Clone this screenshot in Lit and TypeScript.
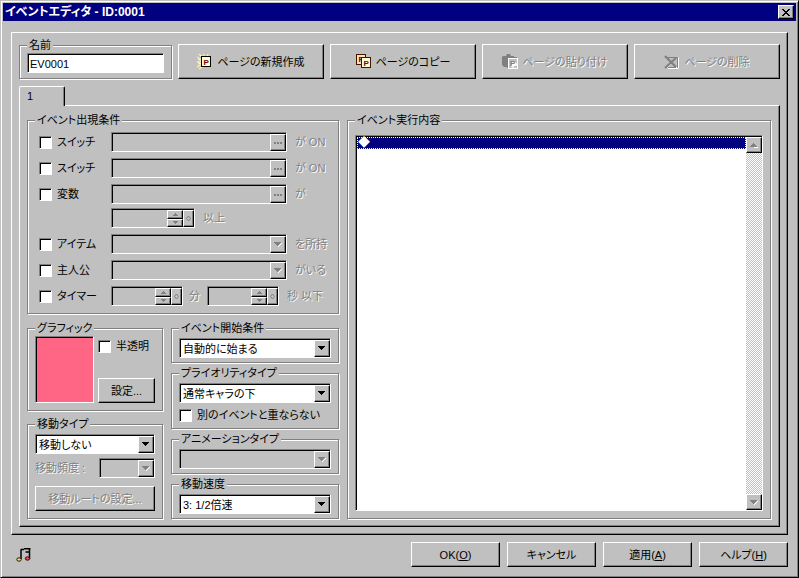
import { LitElement, html, css, svg, nothing } from "lit";
import { customElement, property } from "lit/decorators.js";

/* Shared look of raised and sunken edges, text and disabled state */
const base = css`
  *, *::before, *::after { box-sizing: border-box; }
  :host {
    font-family: "Liberation Sans", "Noto Sans CJK JP", sans-serif;
    font-size: 11px;
    line-height: 16px;
    font-feature-settings: "palt" 1;
    color: #000;
  }
  button, input, select {
    font: inherit;
    font-feature-settings: inherit;
    color: inherit;
    margin: 0;
    padding: 0;
    border-radius: 0;
    outline: none;
  }
  .raised {
    background: #c0c0c0;
    border: 1px solid;
    border-color: #fff #000 #000 #fff;
    box-shadow: inset -1px -1px 0 #808080;
  }
  .sunken {
    border: 1px solid;
    border-color: #808080 #fff #fff #808080;
    box-shadow: inset 1px 1px 0 #000;
    padding: 1px 0 0 1px;
  }
  .off { color: #808080; text-shadow: 1px 1px 0 #fff; }
  svg { display: block; flex: none; }
`;

const arrow = (up: boolean, off: boolean) => html`
  <svg width="8" height="5" viewBox="0 0 8 5" shape-rendering="crispEdges">
    ${off ? svg`<path d=${up ? "M1 5h7v-1h-1z" : "M8 1L4.5 5H4L8 0z"} fill="#fff" />` : nothing}
    <path d=${up ? "M3 0h1v1h1v1h1v1h1v1H0V3h1V2h1V1h1z" : "M0 0h7v1H6v1H5v1H4v1H3V3H2V2H1V1H0z"}
      fill=${off ? "#808080" : "#000"} />
  </svg>`;

@customElement("combo-box")
export class ComboBox extends LitElement {
  @property() value = "";
  @property() label = "";
  @property({ type: Boolean }) disabled = false;
  static styles = [base, css`
    :host { display: block; min-width: 0; }
    .box { display: grid; height: 20px; background: #fff; }
    .box.grey { background: #c0c0c0; }
    select {
      grid-area: 1 / 1;
      appearance: none;
      border: 0;
      background: transparent;
      padding-left: 2px;
      min-width: 0;
      width: 100%;
      opacity: 1;
    }
    .arrow {
      grid-area: 1 / 1;
      justify-self: end;
      width: 16px;
      display: flex;
      align-items: center;
      justify-content: center;
      pointer-events: none;
    }
  `];
  render() {
    return html`<div class="box sunken ${this.disabled ? "grey" : ""}">
      <select aria-label=${this.label} ?disabled=${this.disabled}><option>${this.value}</option></select>
      <span class="arrow raised">${arrow(false, this.disabled)}</span>
    </div>`;
  }
}

@customElement("spin-box")
export class SpinBox extends LitElement {
  @property() label = "";
  static styles = [base, css`
    :host { display: block; }
    .box { display: flex; height: 20px; }
    input { flex: 1; min-width: 0; border: 0; background: transparent; }
    .pair { display: grid; grid-template-rows: 1fr 1fr; width: 16px; }
    button { display: flex; align-items: center; justify-content: center; overflow: hidden; }
    .knob { width: 11px; }
  `];
  render() {
    return html`<div class="box sunken">
      <input type="text" aria-label=${this.label} disabled />
      <span class="pair">
        <button class="raised" disabled aria-label="増やす">
          <svg width="5" height="3" viewBox="0 0 5 3" shape-rendering="crispEdges"><path d="M2 0h1v1h1v1h1v1H0V2h1V1h1z" fill="#808080" /></svg>
        </button>
        <button class="raised" disabled aria-label="減らす">
          <svg width="5" height="3" viewBox="0 0 5 3" shape-rendering="crispEdges"><path d="M0 0h5v1H4v1H3v1H2V2H1V1H0z" fill="#808080" /></svg>
        </button>
      </span>
      <button class="raised knob" disabled aria-label="調整">
        <svg width="5" height="7" viewBox="0 0 5 7"><path d="M2.5 1L4.5 3.5L2.5 6L.5 3.5z" fill="none" stroke="#808080" /></svg>
      </button>
    </div>`;
  }
}

@customElement("check-box")
export class CheckBox extends LitElement {
  @property() label = "";
  static styles = [base, css`
    :host { display: block; }
    label { display: flex; align-items: center; gap: 5px; white-space: nowrap; height: 16px; }
    input { appearance: none; width: 13px; height: 13px; background: #fff; flex: none; }
  `];
  render() {
    return html`<label><input type="checkbox" class="sunken" />${this.label}</label>`;
  }
}

const icons = {
  create: html`<svg width="16" height="16" viewBox="0 0 16 16">
    <path d="M0 3l5 3M2 0l4 4M7 0v4M11 0l-1 3M0 8h5M0 13l5-3M2 15l4-3" stroke="#fff2a0" stroke-width="1.4" />
    <path d="M1 5l4 2M4 1l2 3M1 10l4-1" stroke="#fffbd0" />
    <rect x="4.500" y="2.500" width="9" height="10" fill="#ffffc8" stroke="#000" />
    <text x="6.500" y="10.500" font-family="Liberation Sans" font-weight="bold" font-size="8" fill="#700020">P</text></svg>`,
  copy: html`<svg width="16" height="16" viewBox="0 0 16 16">
    <rect x=".5" y=".5" width="9" height="10" fill="#ffe0b8" stroke="#4a1000" />
    <text x="2.500" y="8" font-family="Liberation Sans" font-weight="bold" font-size="8" fill="#700000">P</text>
    <rect x="5.500" y="3.500" width="9" height="10" fill="#ffffc8" stroke="#4a1000" />
    <text x="7.500" y="11.500" font-family="Liberation Sans" font-weight="bold" font-size="8" fill="#600060">P</text></svg>`,
  paste: html`<svg width="16" height="16" viewBox="0 0 16 16">
    <path d="M1 2h3l1-2h3l1 2h3v11H2l-2-2V3z" fill="#808080" />
    <rect x="6.500" y="4.500" width="9" height="10" fill="#c0c0c0" stroke="#fff" />
    <path d="M5.500 14V3.500h9.500" fill="none" stroke="#808080" />
    <text x="9" y="12.500" font-family="Liberation Sans" font-weight="bold" font-size="8" fill="#fff">P</text>
    <text x="8" y="11.500" font-family="Liberation Sans" font-weight="bold" font-size="8" fill="#808080">P</text></svg>`,
  remove: html`<svg width="16" height="16" viewBox="0 0 16 16">
    <path d="M4 14.500h10.500v-11" fill="none" stroke="#fff" />
    <path d="M4 3.500h9.500v10H4" fill="none" stroke="#808080" />
    <path d="M3 4l10 10M12 4L3 14" stroke="#fff" />
    <path d="M1 2l5 5 6 6M12 4L1 14" stroke="#808080" stroke-width="2.200" fill="none" /></svg>`,
  close: html`<svg width="8" height="7" viewBox="0 0 8 7" shape-rendering="crispEdges">
    <path d="M0 0h2v1h1v1h2V1h1V0h2v1H7v1H6v1H5v1h1v1h1v1h1v1H6V6H5V5H3v1H2v1H0V6h1V5h1V4h1V3H2V2H1V1H0z" fill="#000" /></svg>`,
  music: html`<svg width="15" height="14" viewBox="0 0 15 14">
    <path d="M5 11V2M4.500 1.500H8M8 .750h6.500M13.500 0v11M9.500 4h4.500" fill="none" stroke="#000" stroke-width="1.500" />
    <ellipse cx="3" cy="11.500" rx="2.200" ry="1.700" fill="#f0e060" stroke="#201800" />
    <ellipse cx="11.500" cy="10.500" rx="2.200" ry="1.700" fill="#e05060" stroke="#400" />
  </svg>`,
  dots: html`<svg width="8" height="2" viewBox="0 0 8 2" shape-rendering="crispEdges">
    <path d="M0 0h2v2H0zM3 0h2v2H3zM6 0h2v2H6z" fill="#808080" /></svg>`,
};

const picker = (label: string) => html`<div class="picker sunken">
  <input type="text" aria-label=${label} disabled />
  <button class="raised" disabled aria-label="${label}を選択">${icons.dots}</button>
</div>`;

@customElement("app-root")
export class AppRoot extends LitElement {
  static styles = [base, css`
    :host { display: block; }
    .window {
      display: flex;
      flex-direction: column;
      min-height: 100vh;
      background: #c0c0c0;
      border: 1px solid;
      border-color: #c0c0c0 #000 #000 #c0c0c0;
      box-shadow: inset 1px 1px 0 #fff, inset -1px -1px 0 #808080;
      padding: 2px;
    }
    .title {
      display: flex;
      align-items: center;
      justify-content: space-between;
      height: 18px;
      padding: 0 2px;
      background: #000080;
      color: #fff;
    }
    h1 { margin: 0; font-size: 12px; font-weight: bold; }
    .close { width: 16px; height: 14px; display: grid; place-items: center; }
    .main {
      flex: 1;
      display: flex;
      flex-direction: column;
      margin: 11px 8px 7px;
      padding: 4px 7px 7px;
    }
    .top { display: flex; align-items: flex-end; gap: 6px; margin-bottom: 7px; }
    .top button { flex: 1; height: 35px; }
    .name { width: 153px; height: 42px; padding: 0 7px 6px; }
    .name input { display: block; width: 100%; height: 20px; background: #fff; padding-left: 2px; }
    .push { display: flex; align-items: center; justify-content: center; gap: 4px; white-space: nowrap; height: 25px; }
    fieldset {
      margin: 0;
      min-width: 0;
      border: 1px solid #808080;
      box-shadow: 1px 1px 0 #fff, inset 1px 1px 0 #fff;
      padding: 2px 7px 4px;
    }
    legend { background: #c0c0c0; height: 16px; white-space: nowrap; }
    .tab {
      align-self: flex-start;
      width: 46px;
      height: 20px;
      margin-bottom: -1px;
      border-bottom: 0;
      border-radius: 2px 2px 0 0;
      box-shadow: inset -1px 0 0 #808080;
      text-align: left;
      padding: 0 7px 2px;
      z-index: 1;
    }
    .page { flex: 1; display: flex; gap: 8px; padding: 6px 8px 7px 7px; }
    .left { width: 312px; flex: none; display: flex; flex-direction: column; gap: 6px; }
    .conditions { padding: 4px 7px 7px; }
    .rows { display: grid; gap: 6px; padding-left: 4px; }
    .row { display: flex; align-items: center; height: 20px; white-space: nowrap; }
    .row.near { margin-top: -2px; }
    .row .lead { width: 72px; }
    .row .wide { width: 176px; }
    .row .number { width: 84px; }
    .row .time { width: 72px; }
    .row .off { padding-left: 8px; }
    .row .unit { width: 24px; padding-left: 6px; }
    .picker { display: flex; height: 20px; }
    .picker input { flex: 1; min-width: 0; border: 0; background: transparent; }
    .picker button { width: 16px; display: grid; place-items: center; }
    .lower { flex: 1; display: grid; grid-template-columns: 136px 1fr; gap: 8px; }
    .stack { display: flex; flex-direction: column; justify-content: space-between; }
    .graphic { display: flex; gap: 4px; padding: 0 7px 7px; }
    .swatch { width: 60px; height: 67px; background: #ff6686; }
    .side { display: flex; flex-direction: column; justify-content: space-between; padding-top: 2px; }
    .side button { width: 57px; }
    .move { padding-bottom: 7px; }
    .freq { display: flex; align-items: center; justify-content: space-between; margin: 4px 0 8px; white-space: nowrap; }
    .freq combo-box { width: 56px; }
    .move .push { width: 100%; }
    .gap { margin: 4px 0 1px; }
    .commands { flex: 1; display: flex; padding: 7px; }
    .list { flex: 1; display: flex; background: #fff; }
    ul { flex: 1; margin: 0; padding: 0; list-style: none; }
    li {
      height: 12px;
      line-height: 10px;
      color: #fff;
      background: #000080;
      border: 1px dotted #fff;
      font-size: 12px;
    }
    .scroll {
      width: 16px;
      display: flex;
      flex-direction: column;
      justify-content: space-between;
      background: repeating-conic-gradient(#fff 0 25%, #c0c0c0 0 50%) 0 0 / 2px 2px;
    }
    .scroll button { height: 16px; display: grid; place-items: center; }
    .foot { display: flex; align-items: center; gap: 7px; padding: 0 8px 8px 13px; }
    .foot .note { margin-right: auto; }
    .foot .push { width: 89px; gap: 0; }
  `];

  render() {
    return html`<div class="window">
      <header class="title">
        <h1>イベントエディタ - ID:0001</h1>
        <button class="close raised" aria-label="閉じる">${icons.close}</button>
      </header>
      <main class="main raised">
        <div class="top">
          <fieldset class="name">
            <legend>名前</legend>
            <input class="sunken" type="text" aria-label="名前" value="EV0001" />
          </fieldset>
          <button class="push raised">${icons.create}ページの新規作成</button>
          <button class="push raised">${icons.copy}ページのコピー</button>
          <button class="push raised off" disabled>${icons.paste}ページの貼り付け</button>
          <button class="push raised off" disabled>${icons.remove}ページの削除</button>
        </div>
        <button class="tab raised" role="tab" aria-selected="true">1</button>
        <section class="page raised">
          <div class="left">
            <fieldset class="conditions">
              <legend>イベント出現条件</legend>
              <div class="rows">
                <div class="row"><check-box class="lead" label="スイッチ"></check-box><div class="wide">${picker("スイッチ1")}</div><span class="off">が ON</span></div>
                <div class="row"><check-box class="lead" label="スイッチ"></check-box><div class="wide">${picker("スイッチ2")}</div><span class="off">が ON</span></div>
                <div class="row"><check-box class="lead" label="変数"></check-box><div class="wide">${picker("変数")}</div><span class="off">が</span></div>
                <div class="row near"><span class="lead"></span><spin-box class="number" label="変数の値"></spin-box><span class="off">以上</span></div>
                <div class="row"><check-box class="lead" label="アイテム"></check-box><combo-box class="wide" label="アイテム" disabled></combo-box><span class="off">を所持</span></div>
                <div class="row"><check-box class="lead" label="主人公"></check-box><combo-box class="wide" label="主人公" disabled></combo-box><span class="off">がいる</span></div>
                <div class="row"><check-box class="lead" label="タイマー"></check-box><spin-box class="time" label="分"></spin-box><span class="off unit">分</span><spin-box class="time" label="秒"></spin-box><span class="off">秒 以下</span></div>
              </div>
            </fieldset>
            <div class="lower">
              <div class="stack">
                <fieldset class="graphic">
                  <legend>グラフィック</legend>
                  <div class="swatch sunken"></div>
                  <div class="side">
                    <check-box label="半透明"></check-box>
                    <button class="push raised">設定...</button>
                  </div>
                </fieldset>
                <fieldset class="move">
                  <legend>移動タイプ</legend>
                  <combo-box label="移動タイプ" value="移動しない"></combo-box>
                  <div class="freq"><span class="off">移動頻度 :</span><combo-box label="移動頻度" disabled></combo-box></div>
                  <button class="push raised off" disabled>移動ルートの設定...</button>
                </fieldset>
              </div>
              <div class="stack">
                <fieldset>
                  <legend>イベント開始条件</legend>
                  <combo-box label="イベント開始条件" value="自動的に始まる"></combo-box>
                </fieldset>
                <fieldset>
                  <legend>プライオリティタイプ</legend>
                  <combo-box label="プライオリティタイプ" value="通常キャラの下"></combo-box>
                  <check-box class="gap" label="別のイベントと重ならない"></check-box>
                </fieldset>
                <fieldset>
                  <legend>アニメーションタイプ</legend>
                  <combo-box label="アニメーションタイプ" disabled></combo-box>
                </fieldset>
                <fieldset>
                  <legend>移動速度</legend>
                  <combo-box label="移動速度" value="3: 1/2倍速"></combo-box>
                </fieldset>
              </div>
            </div>
          </div>
          <fieldset class="commands">
            <legend>イベント実行内容</legend>
            <div class="list sunken">
              <ul role="listbox" aria-label="イベント実行内容">
                <li role="option" aria-selected="true">◆</li>
              </ul>
              <div class="scroll">
                <button class="raised" disabled aria-label="上へ">${arrow(true, true)}</button>
                <button class="raised" disabled aria-label="下へ">${arrow(false, true)}</button>
              </div>
            </div>
          </fieldset>
        </section>
      </main>
      <footer class="foot">
        <span class="note">${icons.music}</span>
        <button class="push raised">OK(<u>O</u>)</button>
        <button class="push raised">キャンセル</button>
        <button class="push raised">適用(<u>A</u>)</button>
        <button class="push raised">ヘルプ(<u>H</u>)</button>
      </footer>
    </div>`;
  }
}
